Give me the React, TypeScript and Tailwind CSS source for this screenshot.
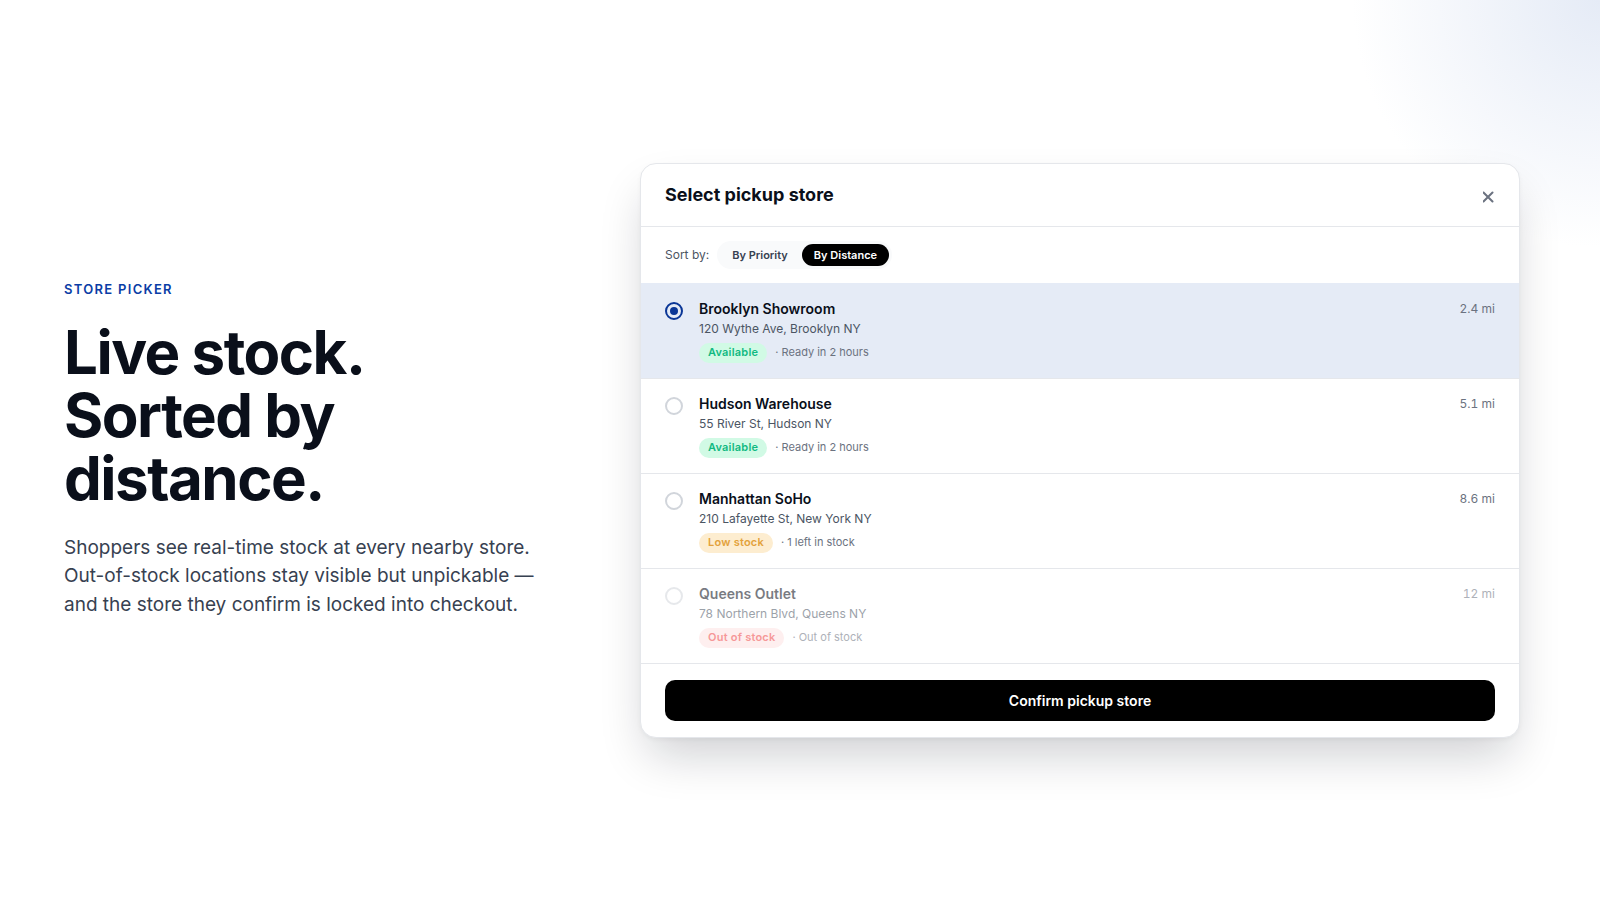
const font = "font-['Inter',sans-serif]";

type Store = {
  name: string;
  address: string;
  distance: string;
  badge: string;
  badgeClass: string;
  note: string;
  selected?: boolean;
  disabled?: boolean;
};

const stores: Store[] = [
  { name: "Brooklyn Showroom", address: "120 Wythe Ave, Brooklyn NY", distance: "2.4 mi", badge: "Available", badgeClass: "bg-[#d1fae5] text-[#10b981]", note: "· Ready in 2 hours", selected: true },
  { name: "Hudson Warehouse", address: "55 River St, Hudson NY", distance: "5.1 mi", badge: "Available", badgeClass: "bg-[#d1fae5] text-[#10b981]", note: "· Ready in 2 hours" },
  { name: "Manhattan SoHo", address: "210 Lafayette St, New York NY", distance: "8.6 mi", badge: "Low stock", badgeClass: "bg-[#fdedd0] text-[#e3a23c]", note: "· 1 left in stock" },
  { name: "Queens Outlet", address: "78 Northern Blvd, Queens NY", distance: "12 mi", badge: "Out of stock", badgeClass: "bg-[#fee2e2] text-[#ef4444]", note: "· Out of stock", disabled: true },
];

function Row({ s }: { s: Store }) {
  return (
    <div className={`flex items-start gap-4 border-b border-[#e5e7eb] px-6 pb-4 ${s.selected ? "h-[96px] bg-[#e5ebf6] pt-[17px]" : "h-[95px] bg-white pt-4"}`}>
      <div className={`mt-[2px] flex size-[18px] shrink-0 items-center justify-center rounded-full border-2 ${s.selected ? "border-[#0a3696]" : "border-[#d1d5db]"} ${s.disabled ? "opacity-55" : ""}`}>
        {s.selected && <div className="size-[8px] rounded-full bg-[#0a3696]" />}
      </div>
      <div className={`min-w-0 flex-1 ${s.disabled ? "opacity-55" : ""}`}>
        <div className="text-[14px] leading-[18px] font-semibold text-[#0a0f1a]">{s.name}</div>
        <div className="mt-[2px] text-[12px] leading-[18px] text-[#4b5563]">{s.address}</div>
        <div className="mt-[5px] flex items-center gap-2">
          <span className={`flex h-[20px] items-center rounded-full px-[9px] text-[11px] font-semibold tracking-[0.02em] ${s.badgeClass}`}>{s.badge}</span>
          <span className="text-[11px] text-[#6b7280]">{s.note}</span>
        </div>
      </div>
      <div className={`text-[12px] leading-[18px] tabular-nums text-[#6b7280] ${s.disabled ? "opacity-55" : ""}`}>{s.distance}</div>
    </div>
  );
}

export default function App() {
  return (
    <div className={`${font} relative flex h-[900px] w-full items-center justify-between overflow-hidden bg-white pl-16 pr-20`}>
      <div className="absolute -right-[250px] -top-[250px] size-[500px] rounded-full bg-[radial-gradient(circle,#e5ebf6_0%,rgba(229,235,246,0)_70%)]" />
      <div className="relative w-[480px] shrink-0 pb-[2px]">
        <div className="text-[13px] leading-[20px] font-semibold tracking-[0.1em] text-[#0a3da6]">STORE PICKER</div>
        <h1 className="mt-[22px] text-[60px] leading-[63px] font-bold tracking-[-0.025em] text-[#0a0f1a]">
          Live stock.<br />Sorted by<br />distance.
        </h1>
        <p className="mt-[24px] text-[19px] leading-[28.5px] text-[#374151]">
          Shoppers see real-time stock at every nearby store. Out-of-stock locations stay visible but unpickable — and the store they confirm is locked into checkout.
        </p>
      </div>
      <div className="relative w-[880px] shrink-0 overflow-hidden rounded-2xl border border-[#e5e7eb] bg-white shadow-[0_24px_48px_-8px_rgba(10,15,30,0.2),0_2px_4px_rgba(10,15,30,0.04)]">
        <div className="flex h-[63px] items-center justify-between border-b border-[#e5e7eb] px-6">
          <div className="text-[18px] font-bold text-[#0a0f1a]">Select pickup store</div>
          <svg className="mt-1" width="12" height="12" viewBox="0 0 12 12" fill="none" stroke="#6b7280" strokeWidth="2" strokeLinecap="round"><path d="M0.5 1.5l9 9M9.5 1.5l-9 9" /></svg>
        </div>
        <div className="flex h-[56px] items-center gap-2 px-6 pt-px">
          <span className="text-[12px] text-[#4b5563]">Sort by:</span>
          <div className="flex gap-[2px] rounded-full bg-[#f9fafb] p-[3px]">
            <span className="flex h-[22px] items-center rounded-full px-3 text-[11px] font-semibold text-[#374151]">By Priority</span>
            <span className="flex h-[22px] items-center rounded-full bg-black px-3 text-[11px] font-semibold text-white">By Distance</span>
          </div>
        </div>
        {stores.map((s) => <Row key={s.name} s={s} />)}
        <div className="px-6 py-4">
          <button className="flex h-[41px] w-full items-center justify-center rounded-[10px] bg-black text-[14px] font-semibold text-white">Confirm pickup store</button>
        </div>
      </div>
    </div>
  );
}
